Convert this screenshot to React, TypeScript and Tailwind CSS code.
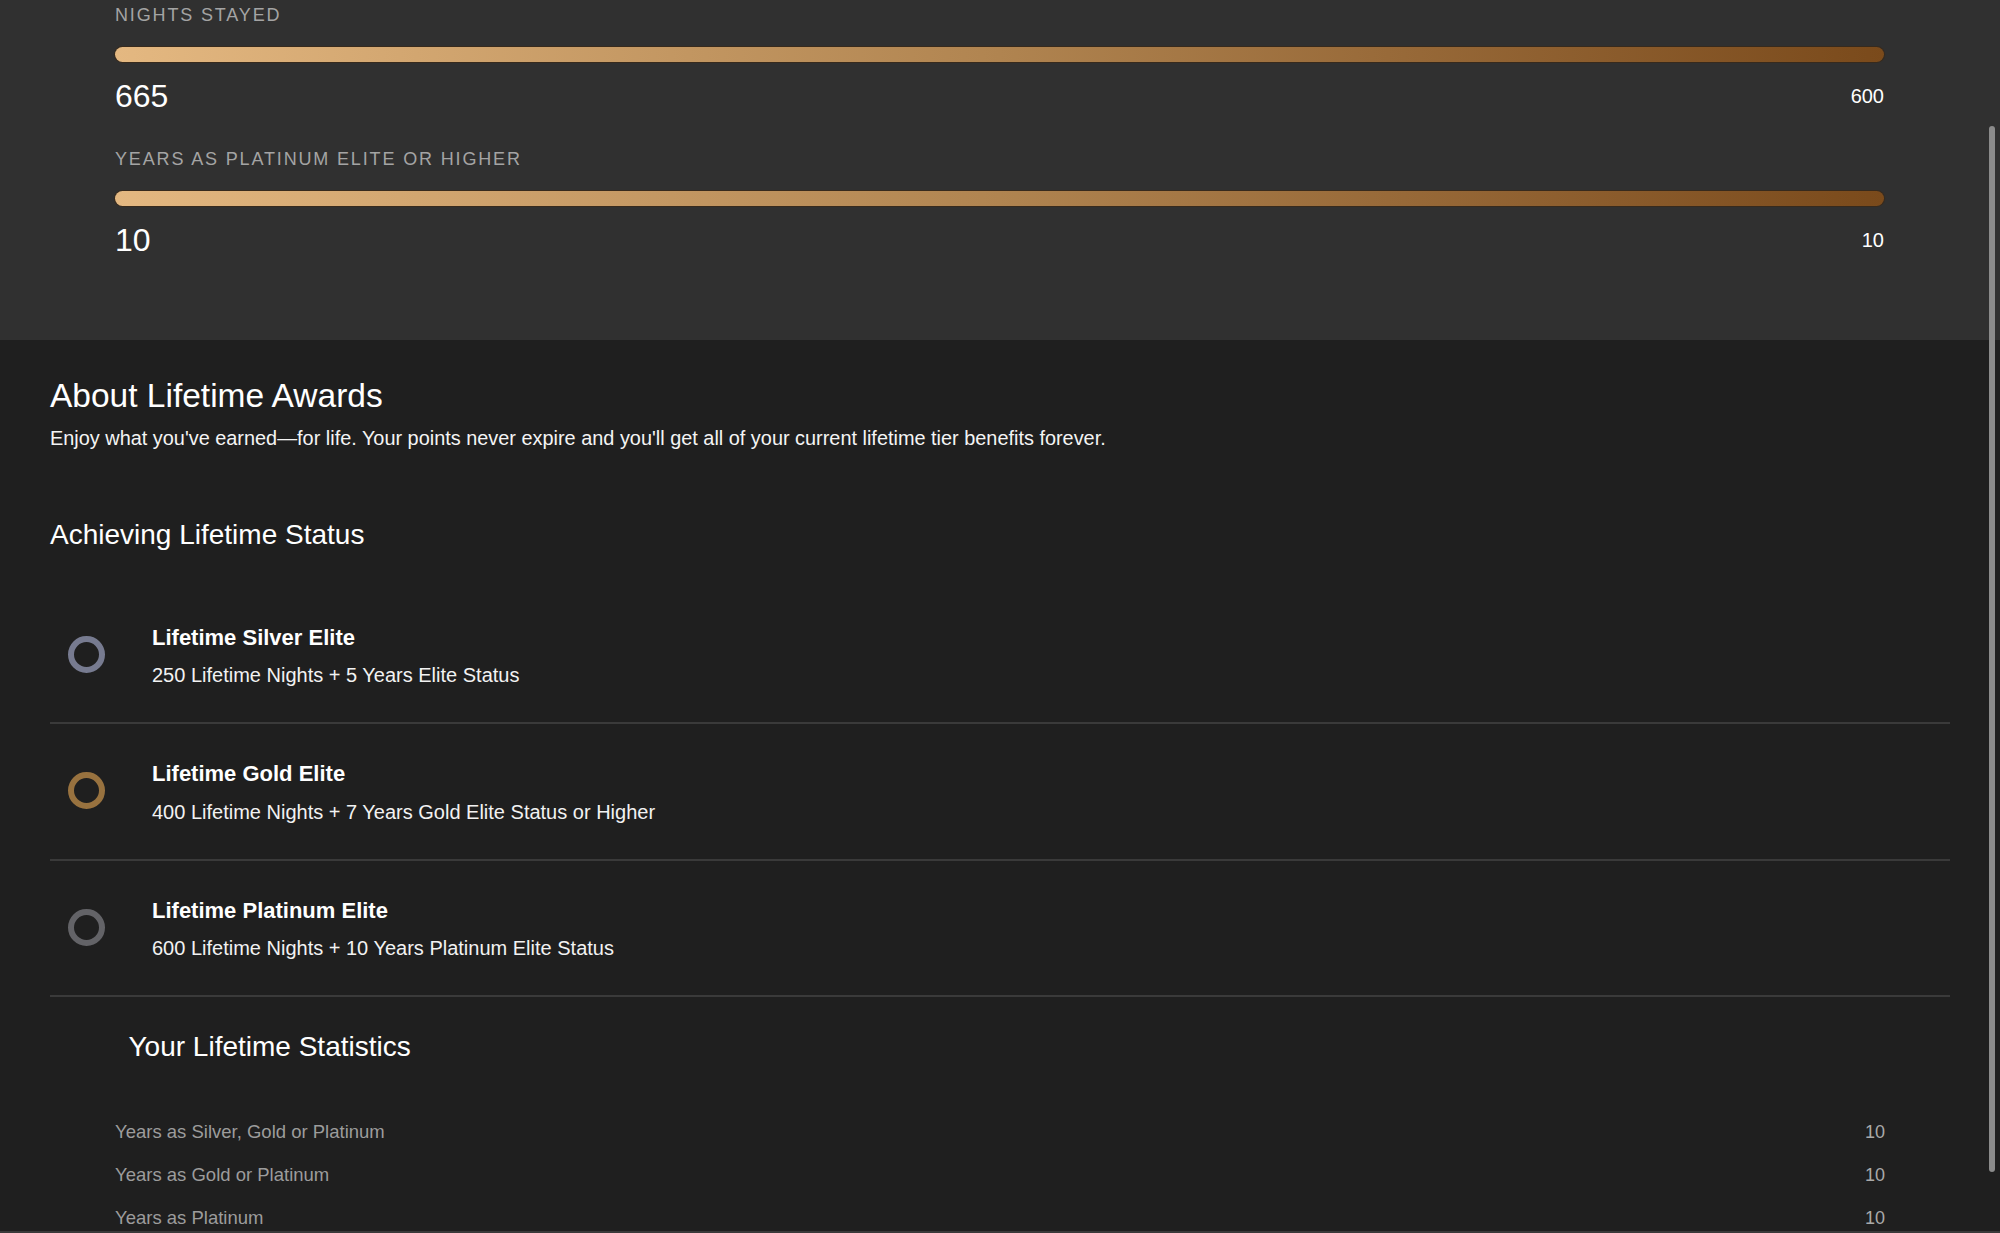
import type { CSSProperties } from "react";

type Metric = {
  label: string;
  value: number;
  target: number;
};

type Tier = {
  name: string;
  requirement: string;
  ring: string;
};

const metrics: Metric[] = [
  { label: "Nights Stayed", value: 665, target: 600 },
  { label: "Years as Platinum Elite or Higher", value: 10, target: 10 },
];

const tiers: Tier[] = [
  {
    name: "Lifetime Silver Elite",
    requirement: "250 Lifetime Nights + 5 Years Elite Status",
    ring: "border-[#777b90]",
  },
  {
    name: "Lifetime Gold Elite",
    requirement: "400 Lifetime Nights + 7 Years Gold Elite Status or Higher",
    ring: "border-[#98723f]",
  },
  {
    name: "Lifetime Platinum Elite",
    requirement: "600 Lifetime Nights + 10 Years Platinum Elite Status",
    ring: "border-[#636367]",
  },
];

const stats: [string, number][] = [
  ["Years as Silver, Gold or Platinum", 10],
  ["Years as Gold or Platinum", 10],
  ["Years as Platinum", 10],
];

export default function App() {
  return (
    <div className="relative h-screen overflow-hidden bg-[#1f1f1f] font-['Liberation_Sans',Arial,sans-serif] text-white">
      {/* progress toward lifetime tier */}
      <section className="flex flex-col gap-[31px] bg-[#303030] pb-[80px] pl-[115px] pr-[116px] pt-[3px]">
        {metrics.map((m) => (
          <MetricBlock key={m.label} metric={m} />
        ))}
      </section>

      <section className="px-[50px] pt-[36px]">
        <h2 className="text-[33.5px] leading-10">About Lifetime Awards</h2>
        <p className="mt-[7.5px] text-[19.9px] leading-7 text-[#f4f4f4]">
          Enjoy what you've earned—for life. Your points never expire and
          you'll get all of your current lifetime tier benefits forever.
        </p>

        <h3 className="mt-[65px] text-[28px] leading-9">
          Achieving Lifetime Status
        </h3>

        <ul className="mt-[35px]">
          {tiers.map((t) => (
            <li
              key={t.name}
              className="flex items-center border-b-2 border-[#3a3a3a] pb-[33px] pt-[36px]"
            >
              <div className="flex w-[72px] justify-center">
                <span
                  className={`mb-[4px] block h-[37px] w-[37px] rounded-full border-[6px] ${t.ring}`}
                />
              </div>
              <div className="ml-[30px]">
                <p className="text-[22px] font-bold leading-7">{t.name}</p>
                <p className="mt-[9.5px] text-[20px] leading-7 text-[#f2f2f2]">
                  {t.requirement}
                </p>
              </div>
            </li>
          ))}
        </ul>

        <h3 className="ml-[78.5px] mt-[31.5px] text-[28px] leading-9">
          Your Lifetime Statistics
        </h3>

        <div className="mt-[55px] flex flex-col gap-[19.3px] px-[65px]">
          {stats.map(([label, n]) => (
            <div
              key={label}
              className="flex items-center justify-between text-[18.5px] leading-6 text-[#9c9c9c]"
            >
              <span>{label}</span>
              <span className="text-[18px] text-[#a9a9a9]">{n}</span>
            </div>
          ))}
        </div>
      </section>

      <div className="mt-[1px] h-[10px] bg-[#3a3a3a]" />

      {/* overlay scrollbar */}
      <div className="absolute right-[5px] top-[126px] h-[1046px] w-[6px] rounded-full bg-[#8b8b8b]" />
    </div>
  );
}

function MetricBlock({ metric }: { metric: Metric }) {
  const pct = Math.min(100, (metric.value / metric.target) * 100);
  const fill: CSSProperties = { width: `${pct}%` };

  return (
    <div>
      <p className="text-[18px] uppercase leading-6 tracking-[1.85px] text-[#a4a4a4]">
        {metric.label}
      </p>
      <div className="mt-5 h-[15px] rounded-full bg-[#2a2a2a] shadow-[0_0_0_1px_rgba(58,40,22,0.7)]">
        <div
          className="h-full rounded-full bg-linear-to-r from-[#e4b881] via-[#b08450] to-[#7a4a1b]"
          style={fill}
        />
      </div>
      <div className="mt-[14px] flex h-10 items-center justify-between">
        <span className="text-[32px] leading-10">{metric.value}</span>
        <span className="text-[20px] leading-10">{metric.target}</span>
      </div>
    </div>
  );
}
